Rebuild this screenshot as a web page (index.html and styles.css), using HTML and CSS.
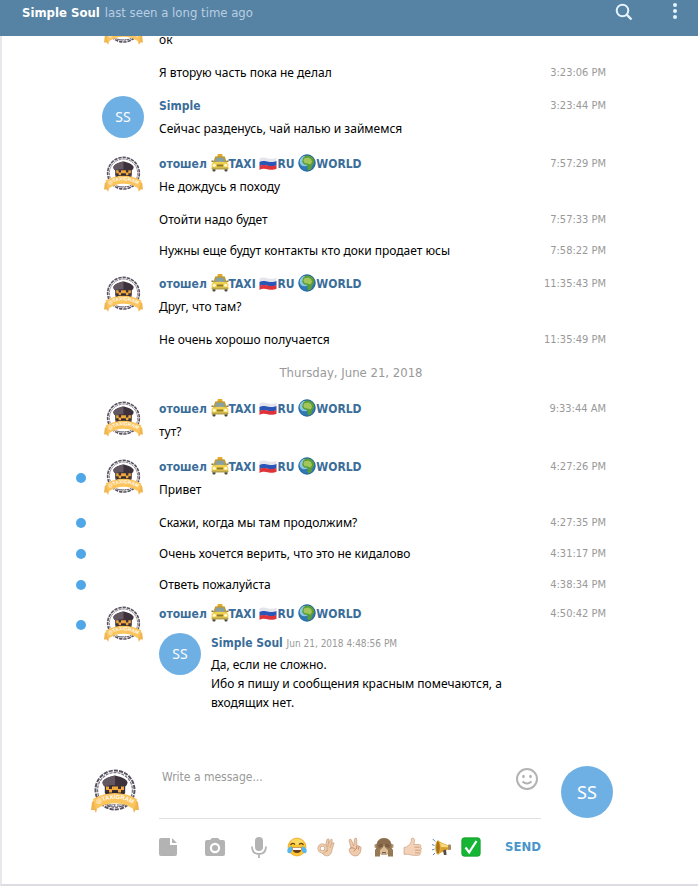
FILE: index.html
```
<!DOCTYPE html>
<html lang="en">
<head>
<meta charset="utf-8">
<meta name="viewport" content="width=device-width, initial-scale=1">
<title>Simple Soul</title>
<link rel="stylesheet" href="styles.css">
</head>
<body>
<svg class="sprite" aria-hidden="true">
  <defs>
    <symbol id="logo" viewBox="0 0 48 46">
      <path id="ribbon-arc" d="M4 37.500 Q24 24 44 37.500" fill="none"/>
      <circle cx="24" cy="22" r="19.500" fill="#fff" stroke="#5a5260" stroke-width="2" stroke-dasharray="4.200 1.100"/>
      <circle cx="24" cy="22" r="17.400" fill="#fff" stroke="#77707c" stroke-width="1.200" stroke-dasharray="3 1"/>
      <path d="M11.500 14c2-4 7.500-5.500 12.500-6.500 5 1 10.500 2.500 12.500 6.500 0 2-1 3.500-2.300 4.500v6.500H13.800v-6.500c-1.300-1-2.300-2.500-2.300-4.500z" fill="#3d323b"/>
      <path d="M24 7.500c-5 1-10.500 2.500-12.500 6.500 0 2 1 3.500 2.300 4.500 3-1.200 6.500-1.500 10.200-1.500z" fill="#635762"/>
      <path d="M14 25.500c5-3 15-3 20 0l-1 2.500H15z" fill="#2b242c"/>
      <path d="M15 18.500h3v2.500h3v-2.500h6v2.500h3v-2.500h3v3.500h-3v2.500h-3V22h-6v2.500h-3V22h-3z" fill="#f2a73a"/>
      <path d="M1 34l5-4v11l-1 4-1.500-3L0 42zM47 34l-5-4v11l1 4 1.500-3L48 42z" fill="#f0b550"/>
      <path d="M2 31c13-8 31-8 44 0l-3 10.500c-11-8.500-27-8.500-38 0z" fill="#fbc55e"/>
      <text class="logo-name"><textPath href="#ribbon-arc" startOffset="50%">@TAXIGRAM</textPath></text>
      <text class="logo-since" x="24" y="38.500">SINCE 2014</text>
    </symbol>
    <symbol id="taxi" viewBox="0 0 18 18">
      <rect x="6.500" width="5" height="3" rx="1" fill="#e8a92b"/>
      <path d="M4.200 2.500q4.800-1 9.600 0L16 9H2z" fill="#c39b25"/>
      <path d="M5 3.800q4-.8 8 0l1.300 4.400H3.700z" fill="#8aa0a0"/>
      <path d="M1.800 8.500q7.200-1.500 14.400 0l1.200 2v4.500H.6v-4.500z" fill="#f2d14c"/>
      <rect x="1.500" y="14.500" width="3" height="3" rx="1" fill="#4a4a40"/>
      <rect x="13.500" y="14.500" width="3" height="3" rx="1" fill="#4a4a40"/>
      <rect x=".6" y="13.500" width="16.800" height="2" rx="1" fill="#b8a44c"/>
      <rect x="5.800" y="10.500" width="6.400" height="2" fill="#8b7a2c"/>
      <circle cx="3.300" cy="11.200" r="1.500" fill="#fffbdc"/><circle cx="14.700" cy="11.200" r="1.500" fill="#fffbdc"/>
      <path d="M.5 6.500h2V8h-2zM15.500 6.500h2V8h-2z" fill="#93751c"/>
    </symbol>
    <symbol id="flag" viewBox="0 0 18 18">
      <path d="M.5 4.500c4-2 6-.5 9 0s5 .5 8-.8V8c-3 1.300-5 1.200-8 .7s-5-1.500-9 .3z" fill="#e4e4ec"/>
      <path d="M.5 8c4-2 6-.7 9-.2s5 .5 8-.8v4.200c-3 1.300-5 1.200-8 .7s-5-1.500-9 .4z" fill="#2c55b8"/>
      <path d="M.5 12c4-2 6-.7 9-.2s5 .5 8-.8v3.800c-3 1.300-5 1.200-8 .7s-5-1.500-9 .4z" fill="#df3339"/>
    </symbol>
    <symbol id="globe" viewBox="0 0 18 18">
      <circle cx="9" cy="9" r="8.500" fill="#2f78b4"/>
      <circle cx="6.500" cy="7" r="5.200" fill="#8cc8e6"/>
      <path d="M5 4c2-2.500 4-3 6-2.600 2 .4 3.800 1.600 4.800 3.100l.5 4-1.800 2.500-1 3.500-2.500 2.500-1.700-2.500.2-3.500-3.500-.5L4.200 8z" fill="#5a9e39"/>
      <path d="M6 4.500l4-1 3 1.500 1 3-1.500 2.500-3-1-3-.5L5.500 7z" fill="#a3c65c"/>
      <circle cx="9" cy="9" r="8.200" fill="none" stroke="#235f91" stroke-width=".7"/>
    </symbol>
    <symbol id="joy" viewBox="0 0 20 20">
      <circle cx="10" cy="10" r="9" fill="#fdc62e" stroke="#e49b25" stroke-width=".6"/>
      <ellipse cx="10" cy="5" rx="6" ry="3" fill="#ffe27a" opacity=".7"/>
      <path d="M3.500 8q2-3 4.500-.5M12 7.500q2.500-2.500 4.500.5" fill="none" stroke="#67411a" stroke-width="1.200"/>
      <path d="M5 10.500h10q-.8 5.500-5 5.500t-5-5.500z" fill="#6c3c1c"/>
      <path d="M5.500 10.700h9l-.5 2.300H6z" fill="#fff"/>
      <path d="M4.800 9.200C2 9.500-.5 12 .5 15c1.200 2.300 4.200 1.200 4.600-1.500zM15.200 9.200c2.800.3 5.300 2.800 4.300 5.800-1.200 2.300-4.200 1.200-4.600-1.500z" fill="#58b7ee"/>
    </symbol>
    <symbol id="ok-hand" viewBox="0 0 20 20">
      <path d="M9.500 9L11 2.800c.4-1.600 2.200-1.300 2 .3l-.4 3.600L14.300 3c.7-1.400 2.300-.8 1.900.7l-1 4 1-1.500c.8-1.200 2.200-.4 1.700.9L16 12.500c-.3 3.500-1.700 6-4.500 6.300-2.500.2-4.500-1-5.300-3.300z" fill="#eecdab" stroke="#c6997a" stroke-width=".7"/>
      <circle cx="6.500" cy="11.500" r="3.500" fill="#fff" stroke="#c6997a" stroke-width="3"/>
      <circle cx="6.500" cy="11.500" r="3.500" fill="none" stroke="#eecdab" stroke-width="2"/>
      <path d="M12.300 7l-.6 3M15 8l-1.200 3M9.500 14.500q2 0 2.500-2" fill="none" stroke="#c6997a" stroke-width=".7"/>
    </symbol>
    <symbol id="victory" viewBox="0 0 20 20">
      <path d="M6 11L4.200 3.700C4 2 5.800 1.500 6.400 3L8.700 9l.8-6.800c.2-1.500 2.200-1.400 2.200.1L11.800 9c1-1 2-.5 2.200.5 1.500-.4 2.300.8 2 2.200-.3 3-1.300 7-5.200 7.200C7 19 4.500 16 4.300 13c0-1.200.6-1.800 1.700-2z" fill="#efcaac" stroke="#c6977a" stroke-width=".7"/>
      <path d="M5 11.500c2-1.500 4-.5 5.500 1l-1.700 2M11.800 9l-.4 3M14 9.500l-.7 3" fill="none" stroke="#b67b5e" stroke-width=".8"/>
    </symbol>
    <symbol id="monkey" viewBox="0 0 20 20">
      <circle cx="2.600" cy="9" r="2.300" fill="#b39570"/><circle cx="17.400" cy="9" r="2.300" fill="#b39570"/>
      <path d="M2.500 9C2.500 4 5.500 1 10 1s7.500 3 7.500 8-2.500 9-7.500 9-7.500-4-7.500-9z" fill="#8b6c4c"/>
      <ellipse cx="10" cy="12.800" rx="5.500" ry="5" fill="#dcbd97"/>
      <path d="M8 16q2-1 4 0" fill="none" stroke="#64452f"/>
      <path d="M1 19.500V13l4-5.500 4-.7c1 0 1 2 .2 3.200L6 13v6.500zM19 19.500V13l-4-5.500-4-.7c-1 0-1 2-.2 3.200L14 13v6.500z" fill="#977855"/>
      <path d="M4.500 8.500l4-1.200M4.500 10.300L9 8.700M15.500 8.500l-4-1.200M15.500 10.300L11 8.700" stroke="#594330" stroke-width=".8"/>
    </symbol>
    <symbol id="thumb" viewBox="0 0 20 20">
      <path d="M1 10.500q3-.3 5-2.500c2-1.500 2.300-4 2.300-6 .5-1.600 3-1.200 3.200 1.200.1 1.700-.3 3-.7 4.300h5.500c1.800 0 1.900 2.200.8 2.700 1.900.2 1.700 2.600.2 3 1.400.5 1 2.600-.4 2.700.9.900.2 2.300-1.200 2.400-3.700.3-7.500.2-9.700-1H1z" fill="#f3d2b8" stroke="#cfa084" stroke-width=".7"/>
      <path d="M11.500 10.200h5M12 13.200h5M12 15.900h4.500" stroke="#c5906f" stroke-width=".8"/>
    </symbol>
    <symbol id="horn" viewBox="0 0 20 20">
      <path d="M6 4l10.500 4.500v3.800L6 17z" fill="#d7a02e"/>
      <path d="M6 5l10.500 3.700v1.500L6 10z" fill="#f8d878"/>
      <ellipse cx="6" cy="10.500" rx="2.300" ry="6.800" fill="#a8701d" stroke="#e8b43b"/>
      <rect x="16" y="7.500" width="3" height="5.500" rx="1" fill="#a68a5a"/>
      <path d="M11 13.500l1 4.500h2.500l-.5-5.500z" fill="#554a42"/>
      <path d="M.8 2l2.500 2.500M0 7.500l2.500 1M0 13l2.500-1M1 18l2-2" stroke="#5288c4" stroke-width="1"/>
    </symbol>
    <symbol id="check" viewBox="0 0 20 20">
      <rect x=".8" y=".8" width="18.400" height="18.400" rx="2.500" fill="#17b534" stroke="#119e2b" stroke-width=".8"/>
      <path d="M4.500 10.500l3.700 4.800L15.500 4" fill="none" stroke="#fff" stroke-width="2.200"/>
    </symbol>
  </defs>
</svg>

<header class="topbar">
  <h1 class="peer">Simple Soul</h1>
  <span class="status">last seen a long time ago</span>
  <button class="icon-button search" type="button" aria-label="Search">
    <svg width="18" height="18" viewBox="0 0 18 18" fill="none" stroke="currentColor"><circle cx="7.500" cy="7.500" r="5.800" stroke-width="2"/><path d="M11.700 11.700l4.800 4.800" stroke-width="2.400"/></svg>
  </button>
  <button class="icon-button" type="button" aria-label="Menu">
    <svg width="4" height="16" viewBox="0 0 4 16" fill="currentColor"><circle cx="2" cy="2" r="2"/><circle cx="2" cy="8" r="2"/><circle cx="2" cy="14" r="2"/></svg>
  </button>
</header>

<main class="chat">
  <section class="history">
    <article class="message">
      <svg class="avatar"><use href="#logo"/></svg>
      <div class="content continued"><p>ок</p></div>
    </article>
    <article class="message follow"><p class="content">Я вторую часть пока не делал</p><time>3:23:06 PM</time></article>
    <article class="message">
      <span class="avatar initials">SS</span>
      <div class="content"><h2 class="name">Simple</h2><p>Сейчас разденусь, чай налью и займемся</p></div><time>3:23:44 PM</time>
    </article>
    <article class="message">
      <svg class="avatar"><use href="#logo"/></svg>
      <div class="content"><h2 class="name">отошел <svg class="emo"><use href="#taxi"/></svg>TAXI <svg class="emo"><use href="#flag"/></svg>RU <svg class="emo"><use href="#globe"/></svg>WORLD</h2><p>Не дождусь я походу</p></div><time>7:57:29 PM</time>
    </article>
    <article class="message follow"><p class="content">Отойти надо будет</p><time>7:57:33 PM</time></article>
    <article class="message follow"><p class="content">Нужны еще будут контакты кто доки продает юсы</p><time>7:58:22 PM</time></article>
    <article class="message">
      <svg class="avatar"><use href="#logo"/></svg>
      <div class="content"><h2 class="name">отошел <svg class="emo"><use href="#taxi"/></svg>TAXI <svg class="emo"><use href="#flag"/></svg>RU <svg class="emo"><use href="#globe"/></svg>WORLD</h2><p>Друг, что там?</p></div><time>11:35:43 PM</time>
    </article>
    <article class="message follow"><p class="content">Не очень хорошо получается</p><time>11:35:49 PM</time></article>
    <div class="date">Thursday, June 21, 2018</div>
    <article class="message">
      <svg class="avatar"><use href="#logo"/></svg>
      <div class="content"><h2 class="name">отошел <svg class="emo"><use href="#taxi"/></svg>TAXI <svg class="emo"><use href="#flag"/></svg>RU <svg class="emo"><use href="#globe"/></svg>WORLD</h2><p>тут?</p></div><time>9:33:44 AM</time>
    </article>
    <article class="message unread">
      <svg class="avatar"><use href="#logo"/></svg>
      <div class="content"><h2 class="name">отошел <svg class="emo"><use href="#taxi"/></svg>TAXI <svg class="emo"><use href="#flag"/></svg>RU <svg class="emo"><use href="#globe"/></svg>WORLD</h2><p>Привет</p></div><time>4:27:26 PM</time>
    </article>
    <article class="message follow unread"><p class="content">Скажи, когда мы там продолжим?</p><time>4:27:35 PM</time></article>
    <article class="message follow unread"><p class="content">Очень хочется верить, что это не кидалово</p><time>4:31:17 PM</time></article>
    <article class="message follow unread"><p class="content">Ответь пожалуйста</p><time>4:38:34 PM</time></article>
    <article class="message forward unread">
      <svg class="avatar"><use href="#logo"/></svg>
      <div class="content">
        <h2 class="name">отошел <svg class="emo"><use href="#taxi"/></svg>TAXI <svg class="emo"><use href="#flag"/></svg>RU <svg class="emo"><use href="#globe"/></svg>WORLD</h2>
        <div class="quoted">
          <span class="avatar initials">SS</span>
          <div>
            <h3 class="name">Simple Soul <small>Jun 21, 2018 4:48:56 PM</small></h3>
            <p>Да, если не сложно.<br>Ибо я пишу и сообщения красным помечаются, а входящих нет.</p>
          </div>
        </div>
      </div>
      <time>4:50:42 PM</time>
    </article>
  </section>

  <form class="composer">
    <svg class="self"><use href="#logo"/></svg>
    <div class="editor">
      <div class="field">
        <textarea aria-label="Message" placeholder="Write a message..."></textarea>
        <button class="icon-button" type="button" aria-label="Emoji">
          <svg width="22" height="22" viewBox="0 0 22 22" fill="none" stroke="currentColor" stroke-width="2"><circle cx="11" cy="11" r="10"/><path d="M6.500 13.500q4.500 4 9 0"/><ellipse cx="7.500" cy="8.500" rx="1.300" ry="1.800" fill="currentColor" stroke="none"/><ellipse cx="14.500" cy="8.500" rx="1.300" ry="1.800" fill="currentColor" stroke="none"/></svg>
        </button>
      </div>
      <div class="tools">
        <button class="icon-button file" type="button" aria-label="Attach file">
          <svg width="18" height="18" viewBox="0 0 18 18" fill="currentColor"><path d="M2 0h9v7h7v9a2 2 0 0 1-2 2H2a2 2 0 0 1-2-2V2a2 2 0 0 1 2-2zM13 0l5 5h-5z"/></svg>
        </button>
        <button class="icon-button photo" type="button" aria-label="Attach photo">
          <svg width="20" height="18" viewBox="0 0 20 18" fill="currentColor"><path fill-rule="evenodd" d="M7 0h6l2 2h3a2 2 0 0 1 2 2v12a2 2 0 0 1-2 2H2a2 2 0 0 1-2-2V4a2 2 0 0 1 2-2h3zM10 4.800a5.200 5.200 0 1 0 0 10.400 5.200 5.200 0 0 0 0-10.400z"/><circle cx="10" cy="10" r="3"/></svg>
        </button>
        <button class="icon-button voice" type="button" aria-label="Record voice">
          <svg width="16" height="21" viewBox="0 0 16 21"><rect x="4" width="8" height="14" rx="4" fill="currentColor"/><path d="M1 9.500q0 7.500 7 7.500t7-7.500M8 17v4" fill="none" stroke="currentColor" stroke-width="1.800"/></svg>
        </button>
        <div class="emoji-row">
          <button class="icon-button" type="button" aria-label="Tears of joy"><svg class="pick"><use href="#joy"/></svg></button>
          <button class="icon-button" type="button" aria-label="OK hand"><svg class="pick"><use href="#ok-hand"/></svg></button>
          <button class="icon-button" type="button" aria-label="Victory hand"><svg class="pick"><use href="#victory"/></svg></button>
          <button class="icon-button" type="button" aria-label="See no evil"><svg class="pick"><use href="#monkey"/></svg></button>
          <button class="icon-button" type="button" aria-label="Thumbs up"><svg class="pick"><use href="#thumb"/></svg></button>
          <button class="icon-button" type="button" aria-label="Megaphone"><svg class="pick"><use href="#horn"/></svg></button>
          <button class="icon-button" type="button" aria-label="Check mark"><svg class="pick"><use href="#check"/></svg></button>
        </div>
        <button class="send" type="submit">SEND</button>
      </div>
    </div>
    <span class="initials recipient">SS</span>
  </form>
</main>
</body>
</html>
```
FILE: styles.css
```
* { box-sizing: border-box; }

body {
  margin: 0;
  height: 100vh;
  display: flex;
  flex-direction: column;
  background: #fff;
  color: #000;
  font: 12px/20px "Noto Sans", sans-serif;
}

h1, h2, h3, p { margin: 0; }

.sprite { position: absolute; width: 0; height: 0; }

.logo-name {
  font: bold 6px "Liberation Sans", sans-serif;
  fill: #fffaf0;
  text-anchor: middle;
}

.logo-since {
  font: bold 3px "Liberation Sans", sans-serif;
  fill: #4b4450;
  text-anchor: middle;
}

.icon-button {
  display: flex;
  padding: 0;
  border: 0;
  background: none;
  color: #b3b3b3;
  cursor: pointer;
}

.topbar {
  flex: none;
  height: 36px;
  padding: 3px 21px 0 22px;
  display: flex;
  align-items: flex-start;
  gap: 5px;
  background: #5682a3;
  font: 13px/20px "DejaVu Sans Condensed", "DejaVu Sans", sans-serif;
}

.topbar .icon-button { color: #e3f3ff; }
.topbar .search { margin: 0 35px 0 auto; }
.peer { font: inherit; font-weight: bold; color: #fff; }
.status { color: #b9cfe3; }

.chat {
  flex: 1;
  min-height: 0;
  display: flex;
  flex-direction: column;
  border-left: 2px solid #e7e8ec;
  border-bottom: 2px solid #dcdce2;
}

.history {
  flex: 1;
  min-height: 0;
  display: flex;
  flex-direction: column;
  justify-content: flex-end;
  overflow: hidden;
  padding: 0 92px 54px 74px;
}

.message {
  flex: none;
  display: grid;
  grid-template-columns: 11px 42px minmax(0, 1fr) auto;
  column-gap: 15px;
  min-height: 58px;
  padding-top: 8px;
}

.message > .avatar { grid-column: 2; grid-row: 1; }
.message > .content { grid-column: 3; grid-row: 1; }
.message > .continued { padding-top: 23px; }

.message time {
  grid-column: 4;
  color: #999;
  font: 11px/20px "DejaVu Sans Condensed", "DejaVu Sans", sans-serif;
}

.follow {
  min-height: 31px;
  padding-top: 0;
  align-items: center;
}

.unread::before {
  content: "";
  grid-column: 1;
  grid-row: 1;
  width: 10px;
  height: 10px;
  border-radius: 50%;
  background: #4fa7e8;
  align-self: center;
}

.unread:not(.follow)::before { align-self: start; margin-top: 16px; }

.avatar { width: 42px; height: 42px; }
svg.avatar { padding: 0 1px 2px 2px; }

.initials {
  display: flex;
  align-items: center;
  justify-content: center;
  border-radius: 50%;
  background: #6fb0e4;
  color: #fff;
  font-size: 14px;
}

.name {
  height: 23px;
  color: #3a6d99;
  font: bold 12px/20px "DejaVu Sans Condensed", "DejaVu Sans", sans-serif;
  white-space: nowrap;
}

.emo { width: 18px; height: 18px; vertical-align: -4px; }

.name small {
  color: #999;
  font-size: 10px;
  font-weight: normal;
}

.forward { min-height: 0; padding-top: 4px; }
.forward .content { padding-right: 8px; }

.quoted {
  display: flex;
  gap: 10px;
  margin-top: 6px;
}

.quoted .avatar { flex: none; }
.quoted .name { height: 22px; }
.quoted p { line-height: 19px; }

.date {
  flex: none;
  padding-left: 20px;
  color: #999;
  text-align: center;
  font: 13px/36px "DejaVu Sans Condensed", "DejaVu Sans", sans-serif;
}

.composer {
  flex: none;
  display: flex;
  padding: 0 85px 26px 89px;
}

.self {
  flex: none;
  width: 48px;
  height: 46px;
  margin: 2px 20px 0 0;
}

.editor { flex: 1; min-width: 0; }

.field {
  display: flex;
  align-items: flex-start;
  border-bottom: 1px solid #e2e2e2;
  padding: 2px 3px 0;
}

.field textarea {
  flex: 1;
  min-width: 0;
  height: 50px;
  padding: 0;
  border: 0;
  outline: 0;
  resize: none;
  background: none;
  font: 12px/18px "DejaVu Sans Condensed", "DejaVu Sans", sans-serif;
}

.field textarea::placeholder { color: #999; opacity: 1; }

.tools {
  display: flex;
  align-items: center;
  height: 22px;
  margin-top: 17px;
}

.photo { margin-left: 28px; }
.voice { margin-left: 26px; }

.emoji-row {
  flex: 1;
  display: flex;
  gap: 9px;
  margin-left: 20px;
}

.pick { width: 20px; height: 20px; }

.send {
  padding: 0;
  border: 0;
  background: none;
  color: #4a95c9;
  font: bold 13px/20px "DejaVu Sans Condensed", "DejaVu Sans", sans-serif;
  cursor: pointer;
}

.recipient {
  flex: none;
  width: 52px;
  height: 52px;
  margin-left: 20px;
  font-size: 18px;
}
```
